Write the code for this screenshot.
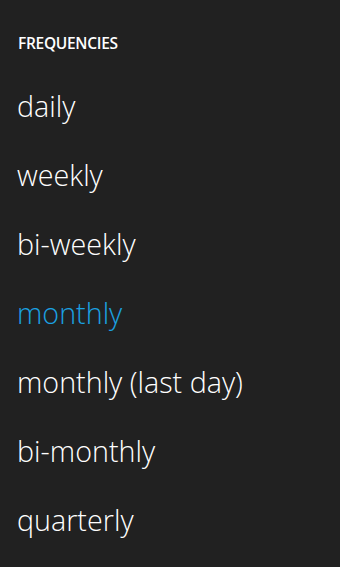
import React from 'react';

const items = ['daily', 'weekly', 'bi-weekly', 'monthly', 'monthly (last day)', 'bi-monthly', 'quarterly'];

const App: React.FC = () => {
  const selected = 'monthly';
  return (
    <div className="w-[340px] h-[567px] bg-[#212121] overflow-hidden font-['Open_Sans',sans-serif]">
      <div className="pl-[18px] pt-[33px] text-[15.5px] font-semibold text-white leading-[20px] tracking-[-0.3px]">
        FREQUENCIES
      </div>
      <ul className="mt-[33px] pl-[17px]">
        {items.map((item) => (
          <li
            key={item}
            className={`h-[69px] text-[28.7px] font-light leading-[40px] ${item === selected ? 'text-[#1ba1e2]' : 'text-white'}`}
          >
            {item}
          </li>
        ))}
      </ul>
    </div>
  );
};

export default App;
